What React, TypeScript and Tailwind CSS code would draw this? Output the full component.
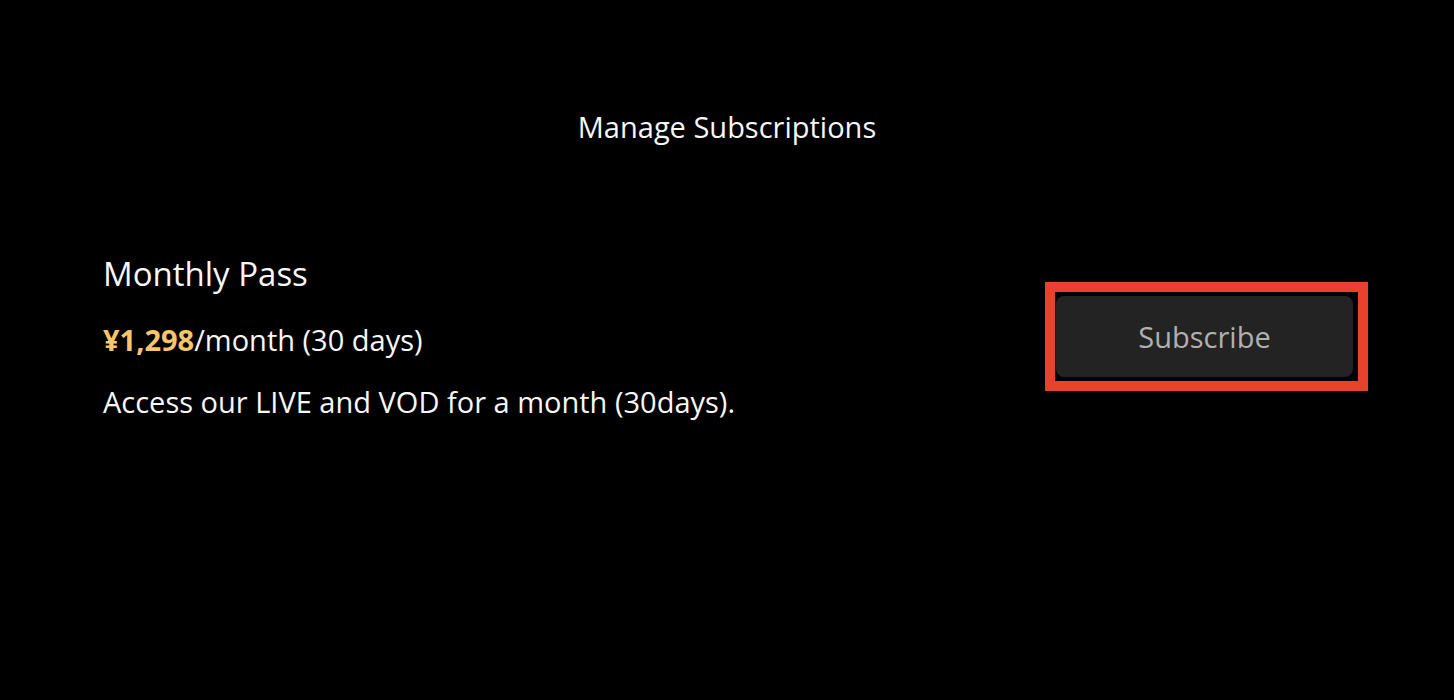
export default function App() {
  return (
    <div className="min-h-screen bg-black text-white font-['Open_Sans',sans-serif]">
      <h1 className="pt-[106px] text-center text-[29px] leading-[42px] font-normal text-[#f7f7f7]">
        Manage Subscriptions
      </h1>

      <div className="mt-[106px] flex items-center justify-between pl-[103px] pr-[86px]">
        <div className="flex flex-col">
          <div className="text-[33px] leading-[40px] text-[#f7f7f7]">Monthly Pass</div>
          <div className="mt-[26px] text-[29px] leading-[40px] text-[#f7f7f7]">
            <span className="font-bold text-[#f7c66b]">¥1,298</span>/month (30 days)
          </div>
          <div className="mt-[22px] text-[29px] leading-[40px] text-[#f7f7f7]">
            Access our LIVE and VOD for a month (30days).
          </div>
        </div>

        <div className="mb-[3px] border-[10px] border-[#e9412b] py-1 pl-px pr-[5px]">
          <button className="flex h-[81px] w-[297px] items-center justify-center rounded-lg bg-[#232323] text-[29px] text-[#b0b0b0]">
            Subscribe
          </button>
        </div>
      </div>
    </div>
  )
}
